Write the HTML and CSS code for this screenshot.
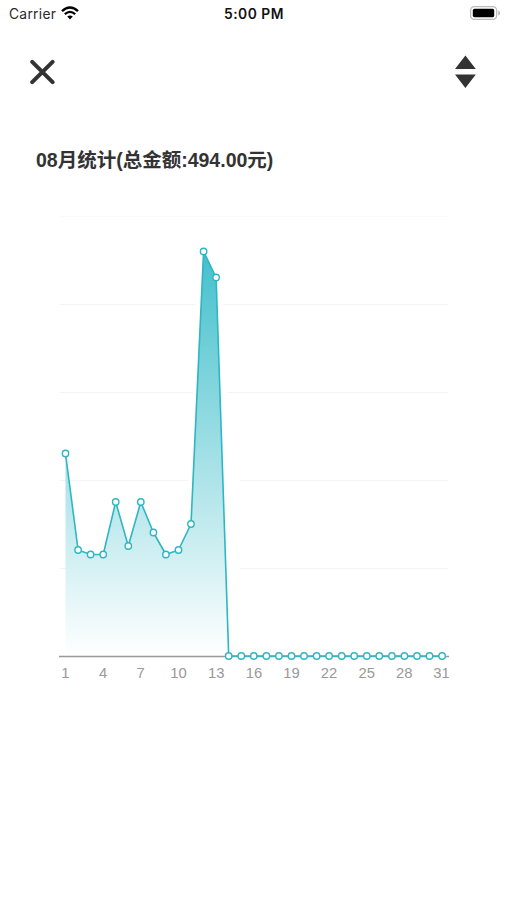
FILE: index.html
```html
<!DOCTYPE html>
<html lang="zh-CN">
<head>
<meta charset="utf-8">
<title>08月统计</title>
<link rel="stylesheet" href="styles.css">
</head>
<body>
<header class="status">
  <div class="carrier">
    <span>Carrier</span>
    <svg class="wifi" width="18" height="14" viewBox="0 0 18 14" aria-hidden="true">
      <path d="M1 5.1Q9 -2.2 17 5.1" stroke-width="2.4"/>
      <path d="M3.8 8.1Q9 3.5 14.2 8.1" stroke-width="2.2"/>
      <path class="wifi-dot" d="M6.2 10.6Q9 8.3 11.8 10.6L9 13.5Z"/>
    </svg>
  </div>
  <time class="clock">5:00 PM</time>
  <svg class="battery" width="32" height="16" viewBox="0 0 32 16" aria-hidden="true">
    <rect class="battery-shell" x="1.6" y="1.6" width="26" height="12.8" rx="3.6"/>
    <rect class="battery-level" x="3.8" y="3.8" width="21.4" height="8.4" rx="1.6"/>
    <path class="battery-tip" d="M29.4 5.6Q31 6.4 31 8T29.4 10.4Z"/>
  </svg>
</header>
<nav class="toolbar">
  <svg width="26" height="26" viewBox="0 0 26 26" role="img" aria-label="关闭">
    <path class="close" d="M3.2 2.8L23.6 23.2M23.6 2.8L3.2 23.2"/>
  </svg>
  <svg width="22" height="34" viewBox="0 0 22 34" role="img" aria-label="切换月份">
    <path class="arrows" d="M11.4 .4L21.8 14H1ZM1 19.5H21.8L11.4 33Z"/>
  </svg>
</nav>
<main>
  <h1 class="title">08月统计(总金额:494.00元)</h1>
  <svg class="chart" width="507" height="500" viewBox="0 200 507 500">
    <defs>
      <linearGradient id="fill" x1="0" y1="251" x2="0" y2="656" gradientUnits="userSpaceOnUse">
        <stop offset="0" stop-color="#43c0cc"/>
        <stop offset="1" stop-color="#ffffff"/>
      </linearGradient>
      <marker id="dot" markerWidth="10" markerHeight="10" refX="5" refY="5" markerUnits="userSpaceOnUse">
        <circle class="dot" cx="5" cy="5" r="3.2"/>
      </marker>
      <clipPath id="plot"><rect x="50" y="660" width="398.8" height="30"/></clipPath>
    </defs>
    <path class="grid grid-top" d="M60 216.5H448"/>
    <path class="grid" d="M60 304.5H195M223 304.5H448M60 392.5H193M227 392.5H448M60 480.5H188M240 480.5H448M60 568.5H66M240 568.5H448"/>
    <path class="area" d="M65.5 656V453.5L78.1 550 90.6 554.5 103.2 554.5 115.7 502 128.3 546 140.8 502 153.4 532.5 165.9 554.5 178.5 550 191 524 203.6 251.5 216.1 277.5 228.7 656Z"/>
    <path class="axis" d="M59 656.5H449"/>
    <polyline class="line" points="65.5,453.5 78.1,550 90.6,554.5 103.2,554.5 115.7,502 128.3,546 140.8,502 153.4,532.5 165.9,554.5 178.5,550 191,524 203.6,251.5 216.1,277.5 228.7,656 241.3,656 253.8,656 266.4,656 278.9,656 291.5,656 304,656 316.6,656 329.1,656 341.7,656 354.2,656 366.8,656 379.3,656 391.9,656 404.4,656 417,656 429.5,656 442.1,656"/>
    <g class="labels" clip-path="url(#plot)">
      <text x="65.3" y="678">1</text>
      <text x="103" y="678">4</text>
      <text x="140.7" y="678">7</text>
      <text x="178.6" y="678">10</text>
      <text x="216.2" y="678">13</text>
      <text x="254" y="678">16</text>
      <text x="291.5" y="678">19</text>
      <text x="329" y="678">22</text>
      <text x="366.7" y="678">25</text>
      <text x="404.3" y="678">28</text>
      <text x="441.6" y="678">31</text>
    </g>
  </svg>
</main>
</body>
</html>
```

FILE: styles.css
```css
body {
  margin: 0;
  height: 900px;
  overflow: hidden;
  background: #fff;
  color: #333;
  font-family: "Liberation Sans", "Noto Sans CJK SC", sans-serif;
}

svg {
  display: block;
}

.status {
  display: grid;
  grid-template-columns: 1fr auto 1fr;
  align-items: center;
  height: 27px;
  padding: 0 6px 0 9px;
  font-family: Inter, sans-serif;
}

.carrier {
  display: flex;
  align-items: center;
  gap: 5px;
  color: #2b2b2b;
  font-size: 13.8px;
  letter-spacing: 0.28px;
}

.wifi {
  position: relative;
  top: -1px;
  fill: none;
  stroke: #000;
}

.wifi .wifi-dot {
  fill: #000;
  stroke: none;
}

.clock {
  margin-right: 2px;
  color: #111;
  font-size: 13.8px;
  font-weight: 600;
  letter-spacing: 0.5px;
}

.battery {
  position: relative;
  top: -0.5px;
  justify-self: end;
}

.battery-shell {
  fill: #fff;
  stroke: #bbb;
  stroke-width: 1.3;
}

.battery-level {
  fill: #000;
}

.battery-tip {
  fill: #aaa;
}

.toolbar {
  display: flex;
  align-items: center;
  justify-content: space-between;
  height: 90px;
  padding: 0 31px 0 29px;
}

.close {
  fill: none;
  stroke: #333;
  stroke-width: 4;
  stroke-linecap: round;
}

.arrows {
  fill: #333;
}

.title {
  height: 54px;
  margin: 29px 0 0 36px;
  font-size: 19.5px;
  font-weight: 700;
  line-height: 28px;
  white-space: nowrap;
}

.grid {
  fill: none;
  stroke: #f4f4f4;
}

.grid-top {
  stroke: #fafafa;
}

.area {
  fill: url(#fill);
}

.axis {
  stroke: #999;
  stroke-width: 1.3;
}

.line {
  fill: none;
  stroke: #2fb6c3;
  stroke-width: 1.6;
  stroke-linejoin: round;
  marker-start: url(#dot);
  marker-mid: url(#dot);
  marker-end: url(#dot);
}

.dot {
  fill: #fff;
  stroke: #2fb6c3;
  stroke-width: 1.4;
}

.labels {
  fill: #999;
  font-size: 14.8px;
  text-anchor: middle;
}
```
